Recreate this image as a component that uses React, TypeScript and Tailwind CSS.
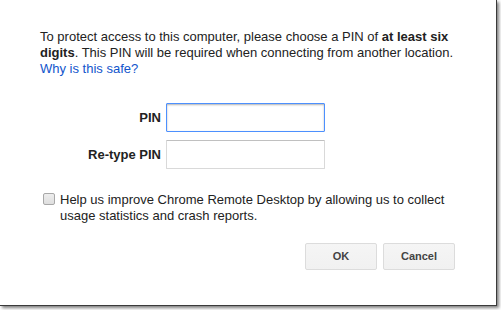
import React from 'react';

function PinRow({ label, focused }: { label: string; focused?: boolean }) {
  return (
    <>
      <label className="text-right text-[13px] font-bold text-[#222] self-center">{label}</label>
      <input
        type="password"
        className={
          focused
            ? 'h-[29px] w-[159px] border border-[#4d90fe] rounded-[1px] outline-none shadow-[inset_0_1px_2px_rgba(0,0,0,0.3)] bg-white'
            : 'h-[29px] w-[159px] border border-[#d9d9d9] border-t-[#c0c0c0] rounded-[1px] outline-none bg-white'
        }
      />
    </>
  );
}

function Button({ children }: { children: React.ReactNode }) {
  return (
    <button className="h-[27px] w-[72px] rounded-[2px] border border-[#dcdcdc] bg-gradient-to-b from-[#f5f5f5] to-[#f1f1f1] text-[11px] font-bold text-[#444]">
      {children}
    </button>
  );
}

export default function App() {
  return (
    <div className="w-[501px] h-[310px] bg-white overflow-hidden font-['Liberation_Sans',Arial,sans-serif]">
      <div className="w-[497px] h-[306px] bg-white border-r border-b border-[#3a3a3a] shadow-[2px_2px_3px_rgba(0,0,0,0.5)] pl-[40px] pt-[29px]">
        <p className="w-[425px] text-[13px] leading-[16px] text-[#222]">
          To protect access to this computer, please choose a PIN of <b>at least six digits</b>. This PIN will
          be required when connecting from another location.
          <br />
          <a className="text-[#1155cc]">Why is this safe?</a>
        </p>

        <div className="mt-[26px] grid grid-cols-[121px_159px] gap-x-[5px] gap-y-[8px]">
          <PinRow label="PIN" focused />
          <PinRow label="Re-type PIN" />
        </div>

        <div className="mt-[23px] ml-[3px] flex gap-[5px]">
          <span className="mt-[1px] h-[12px] w-[12px] shrink-0 rounded-[2px] border border-[#a8a8a8] bg-gradient-to-b from-[#ededed] to-[#dedede]" />
          <p className="w-[400px] text-[13px] leading-[16px] text-[#222]">
            Help us improve Chrome Remote Desktop by allowing us to collect usage statistics and crash reports.
          </p>
        </div>

        <div className="mt-[19px] w-[415px] flex justify-end gap-[6px]">
          <Button>OK</Button>
          <Button>Cancel</Button>
        </div>
      </div>
    </div>
  );
}
